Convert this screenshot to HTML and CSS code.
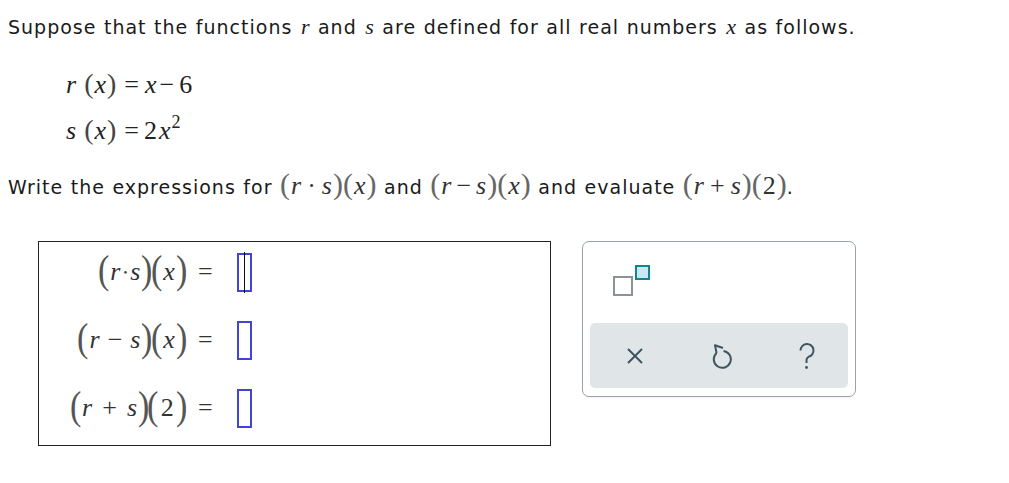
FILE: index.html
```html
<!DOCTYPE html>
<html>
<head>
<meta charset="utf-8">
<link rel="stylesheet" href="styles.css">
</head>
<body>
<p class="intro">Suppose that the functions <i class="v">r</i> and <i class="v">s</i> are defined for all real numbers <i class="v">x</i> as follows.</p>
<div class="defs">
  <div class="def"><i class="mv">r</i><span class="p p1">(</span><i class="mv">x</i><span class="p">)</span><span class="mo">=</span><i class="mv">x</i><span class="mo2">&minus;</span><span class="mn">6</span></div>
  <div class="def"><i class="mv">s</i><span class="p p1">(</span><i class="mv">x</i><span class="p">)</span><span class="mo">=</span><span class="mn">2</span><i class="mv">x</i><span class="sup">2</span></div>
</div>
<p class="task">Write the expressions for <span class="m"><span class="p">(</span><i class="mv">r</i><span class="mdot">&middot;</span><i class="mv">s</i><span class="p">)</span><span class="p">(</span><i class="mv">x</i><span class="p">)</span></span> and <span class="m"><span class="p">(</span><i class="mv">r</i><span class="mop">&minus;</span><i class="mv">s</i><span class="p">)</span><span class="p">(</span><i class="mv">x</i><span class="p">)</span></span> and evaluate <span class="m"><span class="p">(</span><i class="mv">r</i><span class="mop mop-plus">+</span><i class="mv">s</i><span class="p">)</span><span class="p">(</span><span class="mn">2</span><span class="p">)</span></span>.</p>
<div class="work">
  <div class="answers">
    <div class="row"><span class="lhs"><span class="bp">(</span><i class="rv">r</i><span class="dot">&bull;</span><i class="rv">s</i><span class="bp">)</span><span class="bp">(</span><i class="rv">x</i><span class="bp">)</span></span><span class="eq">=</span><span class="box active"><span class="caret"></span></span></div>
    <div class="row"><span class="lhs"><span class="bp">(</span><i class="rv">r</i><span class="op">&minus;</span><i class="rv">s</i><span class="bp">)</span><span class="bp">(</span><i class="rv">x</i><span class="bp">)</span></span><span class="eq">=</span><span class="box"></span></div>
    <div class="row"><span class="lhs"><span class="bp">(</span><i class="rv">r</i><span class="op op-plus">+</span><i class="rv">s</i><span class="bp">)</span><span class="bp">(</span><span class="rn">2</span><span class="bp">)</span></span><span class="eq">=</span><span class="box"></span></div>
  </div>
  <div class="panel">
    <div class="tools">
      <span class="sup-icon"><span class="base"></span><span class="exp"></span></span>
    </div>
    <div class="actions">
      <svg class="ic" width="18" height="18" viewBox="0 0 18 18"><path d="M2 2L16 16M16 2L2 16" stroke="#3f5560" stroke-width="2" fill="none"/></svg>
      <svg class="ic" width="22" height="28" viewBox="0 0 22 28"><path d="M6.6 11A8.5 8.5 0 1 0 13.5 8.9" stroke="#3f5560" stroke-width="2" fill="none"/><path d="M13 6L5 3.2L6.6 11" stroke="#3f5560" stroke-width="2" fill="none" stroke-linejoin="round"/></svg>
      <svg class="ic" width="20" height="30" viewBox="0 0 20 30"><path d="M3.5 9.5a6.5 6.5 0 1 1 8 6.3C10 16.5 9.5 17.5 9.5 19V22" stroke="#3f5560" stroke-width="2" fill="none"/><circle cx="9.5" cy="26.5" r="1.4" fill="#3f5560"/></svg>
    </div>
  </div>
</div>
</body>
</html>
```
FILE: styles.css
```css
body {
  margin: 8px;
  font-family: "DejaVu Sans", Verdana, sans-serif;
  font-size: 19px;
  letter-spacing: 1px;
  word-spacing: 0.5px;
  color: #1a1a1a;
  background: #fff;
}
.v {
  font-family: "Liberation Serif", "Times New Roman", serif;
  font-style: italic;
  font-size: 22px;
  letter-spacing: 0;
  padding: 0 1px;
}
.mv {
  font-family: "Liberation Serif", "Times New Roman", serif;
  font-style: italic;
}
.mn {
  font-family: "Liberation Serif", "Times New Roman", serif;
  font-style: normal;
}
.intro {
  margin: 8px 0 0;
  line-height: 22px;
}
.defs {
  margin: 23px 0 0 57px;
  font-family: "Liberation Serif", "Times New Roman", serif;
  font-size: 26px;
  letter-spacing: 0;
  color: #222;
}
.def { height: 46px; line-height: 46px; }
.def .mv { margin: 0 1px; }
.def .p { color: #444; font-size: 28px; }
.def .p1 { margin-left: 7px; }
.def .mo { margin: 0 5px 0 8px; }
.def .mo2 { margin: 0 5px 0 2px; }
.def .mn { letter-spacing: 1px; }
.def .sup { font-size: 18px; vertical-align: 11px; line-height: 0; }
.task {
  margin: 17px 0 0;
  line-height: 28px;
}
.m {
  font-family: "Liberation Serif", "Times New Roman", serif;
  font-size: 26px;
  letter-spacing: 0;
  word-spacing: 0;
  color: #333;
}
.m .p { color: #666; font-size: 30px; }
.m .mv { margin: 0 1px; }
.mdot { margin: 0 5px; }
.mop { margin: 0 4px; }
.mop-plus { margin: 0 5px; }
.m .mn { margin: 0 1px; }
.work {
  display: flex;
  align-items: flex-start;
  gap: 31px;
  margin: 40px 0 0 30px;
}
.answers {
  width: 511px;
  height: 203px;
  border: 1px solid #222;
  display: flex;
  flex-direction: column;
  gap: 8px;
}
.row {
  display: flex;
  align-items: center;
  height: 60px;
  font-family: "Liberation Serif", "Times New Roman", serif;
  letter-spacing: 0;
  word-spacing: 0;
  color: #333;
}
.lhs {
  width: 147px;
  display: flex;
  justify-content: flex-end;
  align-items: center;
}
.bp {
  font-size: 40px;
  color: #555;
  line-height: 1;
  display: inline-block;
  transform: scaleX(0.85);
  margin: -4px -2px 0;
}
.rv {
  font-family: "Liberation Serif", "Times New Roman", serif;
  font-style: italic;
  font-size: 26px;
  margin: 0 2px;
}
.rn { font-size: 26px; margin: 0 3px; }
.dot { font-size: 11px; margin: 0 1px; }
.op { margin: 0 6px; font-size: 26px; }
.op-plus { margin: 0 8px; }
.eq { margin: 0 0 0 12px; width: 39px; font-size: 26px; }
.box {
  width: 11px;
  height: 35px;
  border: 2px solid #4444d4;
  position: relative;
}
.box.active .caret {
  position: absolute;
  left: 5px;
  top: -3px;
  width: 1px;
  height: 41px;
  background: #111;
}
.panel {
  width: 258px;
  height: 146px;
  border: 1px solid #9aa4a8;
  border-radius: 7px;
  padding: 0 7px 8px;
  display: flex;
  flex-direction: column;
  box-shadow: 0 1px 1px rgba(0,0,0,0.05);
}
.tools {
  height: 81px;
  padding: 23px 0 0 23px;
  box-sizing: border-box;
}
.sup-icon {
  position: relative;
  width: 36px;
  height: 31px;
  display: block;
}
.sup-icon .base {
  position: absolute;
  left: 0;
  top: 11px;
  width: 16px;
  height: 16px;
  border: 2px solid #8a9396;
}
.sup-icon .exp {
  position: absolute;
  left: 22px;
  top: 0;
  width: 11px;
  height: 11px;
  border: 2px solid #13858f;
  background: #c8e9f1;
}
.actions {
  flex: 1;
  background: #e0e6e8;
  border-radius: 5px;
  display: flex;
  align-items: center;
  justify-content: space-between;
  padding: 0 31px 0 36px;
}
.ic { display: block; }
```
